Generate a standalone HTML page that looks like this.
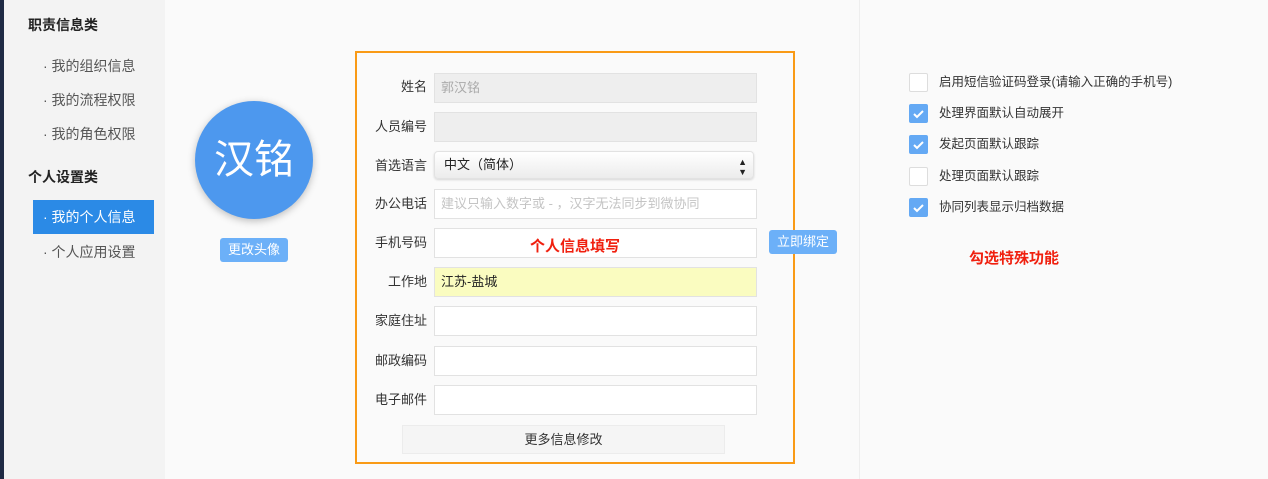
<!DOCTYPE html>
<html><head><meta charset="utf-8"><style>
*{margin:0;padding:0;box-sizing:border-box}
body{width:1268px;height:479px;overflow:hidden;background:#fafafa;font-family:"Liberation Sans","Noto Sans CJK SC",sans-serif;color:#333;position:relative;font-size:13px}
.abs{position:absolute}
.strip{left:0;top:0;width:4px;height:479px;background:#1f2a44}
.side{left:4px;top:0;width:161px;height:479px;background:#f3f3f3}
.h{font-size:14px;font-weight:bold;color:#222;left:28px}
.it{left:43px;font-size:14px;color:#555}
.act{left:33px;top:200px;width:121px;height:34px;background:#2b8ae6;color:#fff;font-size:14px;line-height:34px;padding-left:10px}
.avatar{left:195px;top:101px;width:118px;height:118px;border-radius:50%;background:#4d98ee;color:#fff;font-size:40px;text-align:center;line-height:118px;box-shadow:0 2px 8px rgba(0,0,0,.25)}
.btn{background:#6cb0f8;color:#fff;font-size:13px;text-align:center;border-radius:3px}
.box{left:355px;top:51px;width:440px;height:413px;border:2px solid #f99a16}
.lbl{width:90px;text-align:right;font-size:13px;color:#333;left:337px;margin-top:-3px}
.inp{left:434px;width:323px;height:30px;border:1px solid #e2e2e2;background:#fff;font-size:13px;line-height:28px;padding-left:6px}
.right{left:859px;top:0;width:409px;height:479px;border-left:1px solid #eee;background:#fafafa}
.cb{left:909px;width:19px;height:19px;border:1px solid #ddd;background:#fff;border-radius:2px}
.cb.on{background:#64a9f4;border-color:#64a9f4}
.ct{left:939px;font-size:12.5px;color:#333;margin-top:-2px}
.red{color:#f0200f;font-size:15px;font-weight:bold}
</style></head><body>
<div class="abs strip"></div>
<div class="abs side"></div>
<div class="abs h" style="top:15px">职责信息类</div>
<div class="abs it" style="top:56px">· 我的组织信息</div>
<div class="abs it" style="top:90px">· 我的流程权限</div>
<div class="abs it" style="top:124px">· 我的角色权限</div>
<div class="abs h" style="top:167px">个人设置类</div>
<div class="abs act">· 我的个人信息</div>
<div class="abs it" style="top:242px">· 个人应用设置</div>
<div class="abs avatar">汉铭</div>
<div class="abs btn" style="left:220px;top:238px;width:68px;height:24px;line-height:24px">更改头像</div>
<div class="abs box"></div>
<div class="abs lbl" style="top:79px">姓名</div>
<div class="abs inp" style="top:73px;background:#eee;color:#aaa">郭汉铭</div>
<div class="abs lbl" style="top:119px">人员编号</div>
<div class="abs inp" style="top:112px;background:#eee"></div>
<div class="abs lbl" style="top:158px">首选语言</div>
<div class="abs inp" style="top:151px;width:320px;height:28px;border-radius:4px;background:linear-gradient(#fff,#ececec);line-height:26px;color:#222;padding-left:9px;box-shadow:0 1px 2px rgba(0,0,0,.15)">中文（简体）<span style="position:absolute;right:6px;top:0;font-size:9px;line-height:10px;padding-top:5px">▲<br>▼</span></div>
<div class="abs lbl" style="top:196px">办公电话</div>
<div class="abs inp" style="top:189px;color:#c4c4c4">建议只输入数字或 - ，汉字无法同步到微协同</div>
<div class="abs lbl" style="top:235px">手机号码</div>
<div class="abs inp" style="top:228px"></div>
<div class="abs red" style="left:530px;top:235px">个人信息填写</div>
<div class="abs btn" style="left:769px;top:230px;width:68px;height:24px;line-height:24px">立即绑定</div>
<div class="abs lbl" style="top:274px">工作地</div>
<div class="abs inp" style="top:267px;background:#fafcc0;color:#222">江苏-盐城</div>
<div class="abs lbl" style="top:313px">家庭住址</div>
<div class="abs inp" style="top:306px"></div>
<div class="abs lbl" style="top:353px">邮政编码</div>
<div class="abs inp" style="top:346px"></div>
<div class="abs lbl" style="top:392px">电子邮件</div>
<div class="abs inp" style="top:385px"></div>
<div class="abs" style="left:402px;top:425px;width:323px;height:29px;border:1px solid #ececec;background:#f5f5f5;text-align:center;line-height:27px;color:#333">更多信息修改</div>
<div class="abs right"></div>
<div class="abs cb" style="top:73px"></div><div class="abs ct" style="top:73px">启用短信验证码登录(请输入正确的手机号)</div>
<div class="abs cb on" style="top:104px"><svg width="17" height="17"><path d="M4 9l3 3 6-6" stroke="#fff" stroke-width="2" fill="none"/></svg></div><div class="abs ct" style="top:104px">处理界面默认自动展开</div>
<div class="abs cb on" style="top:135px"><svg width="17" height="17"><path d="M4 9l3 3 6-6" stroke="#fff" stroke-width="2" fill="none"/></svg></div><div class="abs ct" style="top:135px">发起页面默认跟踪</div>
<div class="abs cb" style="top:167px"></div><div class="abs ct" style="top:167px">处理页面默认跟踪</div>
<div class="abs cb on" style="top:198px"><svg width="17" height="17"><path d="M4 9l3 3 6-6" stroke="#fff" stroke-width="2" fill="none"/></svg></div><div class="abs ct" style="top:198px">协同列表显示归档数据</div>
<div class="abs red" style="left:969px;top:247px">勾选特殊功能</div>
</body></html>
